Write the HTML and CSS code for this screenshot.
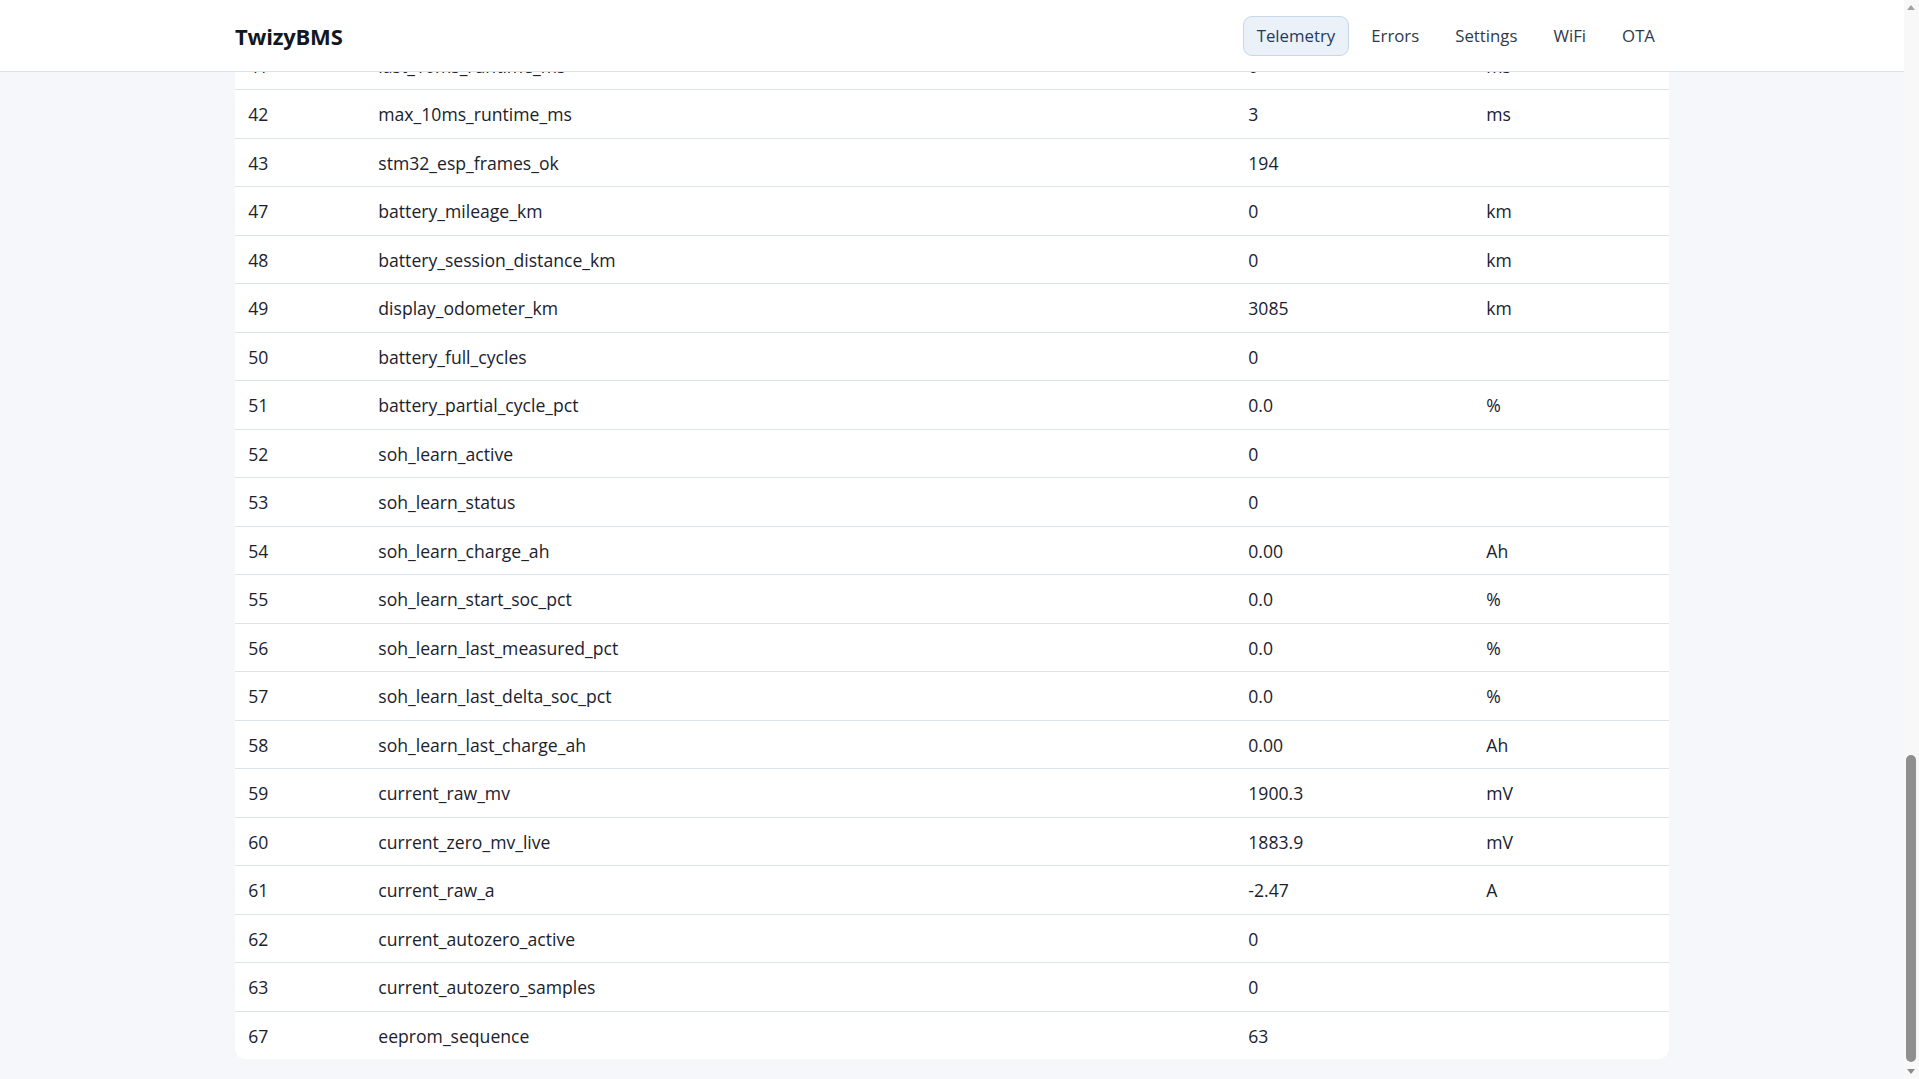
FILE: index.html
```html
<!DOCTYPE html>
<html lang="en">
<head>
<meta charset="utf-8">
<title>TwizyBMS – Telemetry</title>
<link rel="stylesheet" href="styles.css">
</head>
<body>
<header class="topbar">
  <div class="topbar-inner">
    <div class="brand">TwizyBMS</div>
    <nav class="nav">
      <a class="nav-link active" href="#">Telemetry</a>
      <a class="nav-link" href="#">Errors</a>
      <a class="nav-link" href="#">Settings</a>
      <a class="nav-link" href="#">WiFi</a>
      <a class="nav-link" href="#">OTA</a>
    </nav>
  </div>
</header>
<main class="main">
  <div class="card">
    <table class="telemetry">
      <colgroup>
        <col class="c-id"><col class="c-name"><col class="c-val"><col class="c-unit">
      </colgroup>
      <tbody>
        <tr><td>41</td><td>last_10ms_runtime_ms</td><td>0</td><td>ms</td></tr>
        <tr><td>42</td><td>max_10ms_runtime_ms</td><td>3</td><td>ms</td></tr>
        <tr><td>43</td><td>stm32_esp_frames_ok</td><td>194</td><td></td></tr>
        <tr><td>47</td><td>battery_mileage_km</td><td>0</td><td>km</td></tr>
        <tr><td>48</td><td>battery_session_distance_km</td><td>0</td><td>km</td></tr>
        <tr><td>49</td><td>display_odometer_km</td><td>3085</td><td>km</td></tr>
        <tr><td>50</td><td>battery_full_cycles</td><td>0</td><td></td></tr>
        <tr><td>51</td><td>battery_partial_cycle_pct</td><td>0.0</td><td>%</td></tr>
        <tr><td>52</td><td>soh_learn_active</td><td>0</td><td></td></tr>
        <tr><td>53</td><td>soh_learn_status</td><td>0</td><td></td></tr>
        <tr><td>54</td><td>soh_learn_charge_ah</td><td>0.00</td><td>Ah</td></tr>
        <tr><td>55</td><td>soh_learn_start_soc_pct</td><td>0.0</td><td>%</td></tr>
        <tr><td>56</td><td>soh_learn_last_measured_pct</td><td>0.0</td><td>%</td></tr>
        <tr><td>57</td><td>soh_learn_last_delta_soc_pct</td><td>0.0</td><td>%</td></tr>
        <tr><td>58</td><td>soh_learn_last_charge_ah</td><td>0.00</td><td>Ah</td></tr>
        <tr><td>59</td><td>current_raw_mv</td><td>1900.3</td><td>mV</td></tr>
        <tr><td>60</td><td>current_zero_mv_live</td><td>1883.9</td><td>mV</td></tr>
        <tr><td>61</td><td>current_raw_a</td><td>-2.47</td><td>A</td></tr>
        <tr><td>62</td><td>current_autozero_active</td><td>0</td><td></td></tr>
        <tr><td>63</td><td>current_autozero_samples</td><td>0</td><td></td></tr>
        <tr><td>67</td><td>eeprom_sequence</td><td>63</td><td></td></tr>
      </tbody>
    </table>
  </div>
</main>
<div class="scrollbar" aria-hidden="true">
  <span class="sb-arrow sb-up"></span>
  <span class="sb-thumb"></span>
  <span class="sb-arrow sb-down"></span>
</div>
</body>
</html>
```

FILE: styles.css
```css
body {
  margin: 0;
  padding-right: 15px;
  background: #f5f7fa;
  color: #1a222d;
  font-family: "Segoe UI", "Open Sans", "Noto Sans", sans-serif;
  font-size: 17.6px;
}

.topbar {
  position: fixed;
  top: 0;
  left: 0;
  right: 15px;
  z-index: 10;
  background: #ffffff;
  border-bottom: 1px solid #dbe2ea;
}

.topbar-inner {
  width: 1434px;
  margin: 0 auto;
  height: 71px;
  display: flex;
  align-items: center;
  justify-content: space-between;
}

.brand {
  font-weight: 700;
  font-size: 22px;
  color: #111822;
  letter-spacing: -0.2px;
}

.nav {
  display: flex;
  align-items: center;
  gap: 8px;
}

.nav-link {
  display: block;
  padding: 0 13px;
  height: 38px;
  line-height: 38px;
  font-size: 16.8px;
  border: 1px solid transparent;
  border-radius: 9px;
  color: #2f3a48;
  text-decoration: none;
}

.nav-link.active {
  background: #eaf1f8;
  border-color: #c9d7e6;
  color: #1e3a5f;
}

.main {
  padding: 41.5px 0 19px;
}

.card {
  width: 1434px;
  margin: 0 auto;
  background: #ffffff;
  border-radius: 10px;
  overflow: hidden;
}

.telemetry {
  width: 100%;
  border-collapse: collapse;
  table-layout: fixed;
}

.c-id { width: 130px; }
.c-name { width: 870px; }
.c-val { width: 238px; }
.c-unit { width: 196px; }

.telemetry td {
  padding: 13px 13.3px 11px;
  line-height: 23.5px;
  border-bottom: 1px solid #dbe3ec;
  white-space: nowrap;
}

.telemetry tr:last-child td {
  border-bottom: none;
}

/* browser scrollbar at the right edge, scrolled to the bottom */
.scrollbar {
  position: fixed;
  top: 0;
  right: 0;
  width: 15px;
  height: 100vh;
  background: #f8f8f8;
  z-index: 20;
}

.sb-arrow {
  position: absolute;
  left: 3px;
  width: 0;
  height: 0;
  border-left: 4.5px solid transparent;
  border-right: 4.5px solid transparent;
}

.sb-up {
  top: 5px;
  border-bottom: 5px solid #a3a3a3;
}

.sb-down {
  bottom: 5px;
  border-top: 5px solid #8c8c8c;
}

.sb-thumb {
  position: absolute;
  left: 2px;
  width: 10px;
  top: 755px;
  height: 307px;
  border-radius: 5px;
  background: #8f8f8f;
}
```
